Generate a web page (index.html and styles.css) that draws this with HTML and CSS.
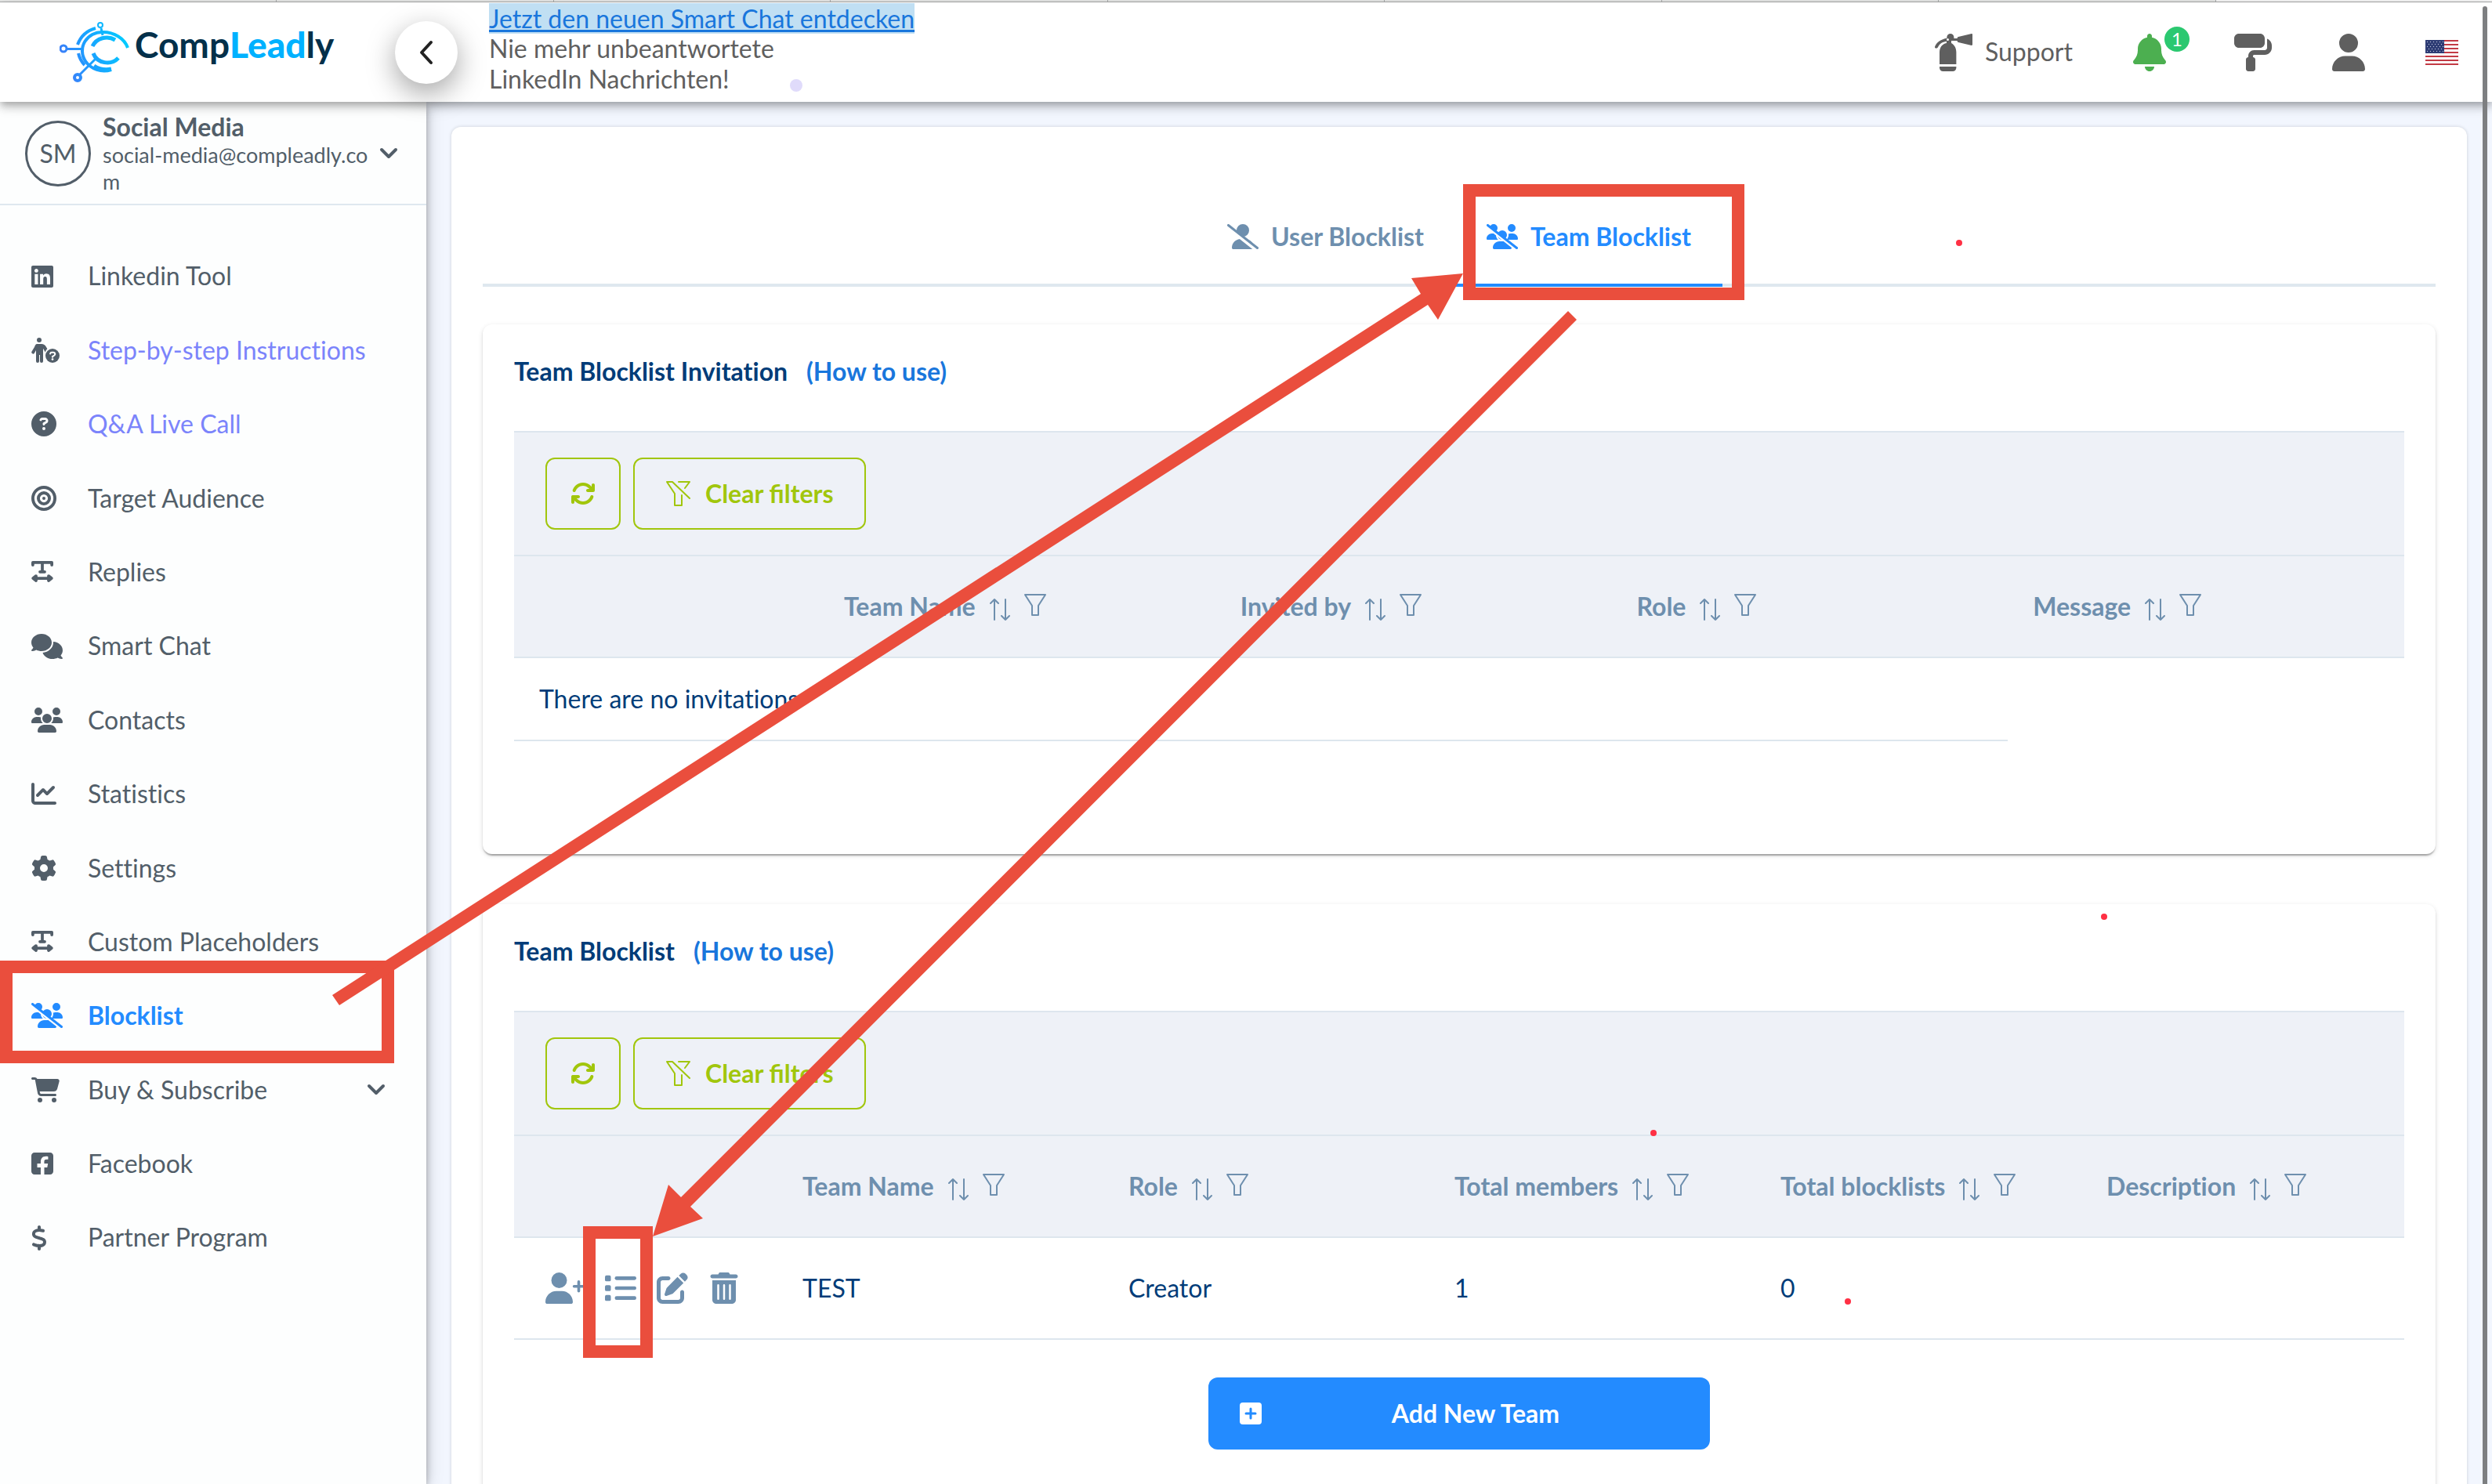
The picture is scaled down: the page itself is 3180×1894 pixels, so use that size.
FILE: index.html
```html
<!DOCTYPE html>
<html lang="en">
<head>
<meta charset="utf-8">
<title>CompLeadly – Team Blocklist</title>
<link rel="stylesheet" href="styles.css">
</head>
<body>
<svg class="sprite" aria-hidden="true">
  <defs>
    <symbol id="i-linkedin" viewBox="0 0 448 512"><path d="M416 32H31.9C14.3 32 0 46.5 0 64.3v383.4C0 465.5 14.3 480 31.9 480H416c17.6 0 32-14.5 32-32.3V64.3c0-17.8-14.4-32.3-32-32.3zM135.4 416H69V202.2h66.5V416zm-33.2-243c-21.3 0-38.5-17.3-38.5-38.5S80.9 96 102.2 96c21.2 0 38.5 17.3 38.5 38.5 0 21.3-17.2 38.5-38.5 38.5zm282.1 243h-66.4V312c0-24.8-.5-56.7-34.5-56.7-34.6 0-39.9 27-39.9 54.9V416h-66.4V202.2h63.7v29.2h.9c8.9-16.8 30.6-34.5 62.9-34.5 67.2 0 79.7 44.3 79.7 101.9V416z"/></symbol>
    <symbol id="i-question" viewBox="0 0 512 512"><path d="M256 512A256 256 0 1 0 256 0a256 256 0 1 0 0 512zM169.8 165.3c7.9-22.3 29.1-37.3 52.8-37.3h58.3c34.9 0 63.1 28.3 63.1 63.1c0 22.6-12.1 43.5-31.7 54.8L280 264.4c-.2 13-10.9 23.6-24 23.6c-13.3 0-24-10.7-24-24V250.5c0-8.6 4.6-16.5 12.1-20.8l44.3-25.4c4.7-2.7 7.6-7.7 7.6-13.1c0-8.4-6.8-15.1-15.1-15.1H222.6c-3.4 0-6.4 2.1-7.5 5.3l-.4 1.2c-4.4 12.5-18.2 19-30.6 14.6s-19-18.2-14.6-30.6l.4-1.2zM224 352a32 32 0 1 1 64 0 32 32 0 1 1 -64 0z"/></symbol>
    <symbol id="i-person-question" viewBox="0 0 576 512"><circle cx="160" cy="48" r="48"/><path d="M112 128h96c42 0 74 22 92 54l26 46c-22 18-34 42-40 70l-46-80V480a32 32 0 0 1-64 0V352h-16v128a32 32 0 0 1-64 0V256l-34 60a32 32 0 0 1-55-32l58-98c10-34 31-58 47-58z"/><circle cx="432" cy="368" r="144"/><path fill="none" stroke="#fff" stroke-width="34" stroke-linecap="round" d="M386 326c4-18 16-26 30-26h32c42 0 48 52 14 66l-30 18v12"/><circle cx="432" cy="440" r="22" fill="#fff"/></symbol>
    <symbol id="i-bullseye" viewBox="0 0 512 512"><g fill="none" stroke="currentColor" stroke-width="62"><circle cx="256" cy="256" r="225"/><circle cx="256" cy="256" r="113"/></g><circle cx="256" cy="256" r="32"/></symbol>
    <symbol id="i-textwidth" viewBox="0 0 448 512"><path fill="none" stroke="currentColor" stroke-width="60" stroke-linecap="round" stroke-linejoin="round" d="M30 112V62h388v50M224 62v190M176 252h96M70 384h308M96 336l-60 48 60 48zM352 336l60 48-60 48z"/></symbol>
    <symbol id="i-comments" viewBox="0 0 640 512"><path d="M208 352c114.9 0 208-78.8 208-176S322.9 0 208 0S0 78.8 0 176c0 38.6 14.7 74.3 39.6 103.4c-3.5 9.4-8.7 17.7-14.2 24.7c-4.8 6.2-9.7 11-13.3 14.3c-1.8 1.6-3.3 2.9-4.3 3.7c-.5 .4-.9 .7-1.1 .8l-.2 .2C1 327.2-1.4 334.4 .8 340.9S9.1 352 16 352c21.8 0 43.8-5.6 62.1-12.5c9.2-3.5 17.8-7.4 25.2-11.4C134.1 343.3 169.8 352 208 352zM448 176c0 112.3-99.1 196.9-216.5 207C255.8 457.4 336.4 512 432 512c38.2 0 73.9-8.7 104.7-23.9c7.5 4 16 7.9 25.2 11.4c18.3 6.9 40.3 12.5 62.1 12.5c6.9 0 13.1-4.5 15.2-11.1c2.1-6.6-.2-13.8-5.8-17.9l-.2-.2c-.2-.2-.6-.4-1.1-.8c-1-.8-2.5-2-4.3-3.7c-3.6-3.3-8.5-8.1-13.3-14.3c-5.5-7-10.7-15.4-14.2-24.7c24.9-29 39.6-64.7 39.6-103.4c0-92.8-84.9-168.9-192.6-175.5c.4 5.1 .6 10.3 .6 15.5z"/></symbol>
    <symbol id="i-users" viewBox="0 0 640 512"><path d="M144 0a80 80 0 1 1 0 160A80 80 0 1 1 144 0zM512 0a80 80 0 1 1 0 160A80 80 0 1 1 512 0zM0 298.7C0 239.8 47.8 192 106.7 192h42.7c15.9 0 31 3.5 44.6 9.7c-1.3 7.2-1.9 14.7-1.9 22.3c0 38.2 16.8 72.5 43.3 96c-.2 0-.4 0-.7 0H21.3C9.6 320 0 310.4 0 298.7zM405.3 320c-.2 0-.4 0-.7 0c26.6-23.5 43.3-57.8 43.3-96c0-7.6-.7-15-1.9-22.3c13.6-6.3 28.7-9.7 44.6-9.7h42.7C592.2 192 640 239.8 640 298.7c0 11.8-9.6 21.3-21.3 21.3H405.3zM224 224a96 96 0 1 1 192 0 96 96 0 1 1 -192 0zM128 485.3C128 411.7 187.7 352 261.3 352H378.7C452.3 352 512 411.7 512 485.3c0 14.7-11.9 26.7-26.7 26.7H154.7c-14.7 0-26.7-11.9-26.7-26.7z"/></symbol>
    <symbol id="i-users-slash" viewBox="0 0 640 512"><use href="#i-users" width="640" height="512"/><path stroke="#fff" stroke-width="60" d="M-10 32L600 512"/><path stroke="currentColor" stroke-width="48" stroke-linecap="round" d="M24 24L616 488"/></symbol>
    <symbol id="i-user" viewBox="0 0 448 512"><path d="M224 256A128 128 0 1 0 224 0a128 128 0 1 0 0 256zm-45.7 48C79.8 304 0 383.8 0 482.3C0 498.7 13.3 512 29.7 512H418.3c16.4 0 29.7-13.3 29.7-29.7C448 383.8 368.2 304 269.7 304H178.3z"/></symbol>
    <symbol id="i-user-slash" viewBox="0 0 640 512"><use href="#i-user" x="96" width="448" height="512"/><path stroke="#fff" stroke-width="84" d="M-10 44L600 524"/><path stroke="currentColor" stroke-width="48" stroke-linecap="round" d="M24 24L616 488"/></symbol>
    <symbol id="i-user-plus" viewBox="0 0 640 512"><use href="#i-user" width="448" height="512"/><path fill="none" stroke="currentColor" stroke-width="46" stroke-linecap="round" d="M544 152v152M468 228h152"/></symbol>
    <symbol id="i-chart" viewBox="0 0 512 512"><path d="M64 64c0-17.7-14.3-32-32-32S0 46.3 0 64V400c0 44.2 35.8 80 80 80H480c17.7 0 32-14.3 32-32s-14.3-32-32-32H80c-8.8 0-16-7.2-16-16V64zm406.6 86.6c12.5-12.5 12.5-32.8 0-45.3s-32.8-12.5-45.3 0L320 210.7l-57.4-57.4c-12.5-12.5-32.8-12.5-45.3 0l-112 112c-12.5 12.5-12.5 32.8 0 45.3s32.8 12.5 45.3 0L240 221.3l57.4 57.4c12.5 12.5 32.8 12.5 45.3 0l128-128z"/></symbol>
    <symbol id="i-gear" viewBox="0 0 512 512"><path d="M495.9 166.6c3.2 8.7 .5 18.4-6.4 24.6l-43.3 39.4c1.1 8.3 1.7 16.8 1.7 25.4s-.6 17.1-1.7 25.4l43.3 39.4c6.9 6.2 9.6 15.9 6.4 24.6c-4.4 11.9-9.7 23.3-15.8 34.3l-4.7 8.1c-6.6 11-14 21.4-22.1 31.2c-5.9 7.2-15.7 9.6-24.5 6.8l-55.7-17.7c-13.4 10.3-28.2 18.9-44 25.4l-12.5 57.1c-2 9.1-9 16.3-18.2 17.8c-13.8 2.3-28 3.5-42.5 3.5s-28.7-1.2-42.5-3.5c-9.2-1.5-16.2-8.7-18.2-17.8l-12.5-57.1c-15.8-6.5-30.6-15.1-44-25.4L83.1 425.9c-8.8 2.8-18.6 .3-24.5-6.8c-8.1-9.8-15.5-20.2-22.1-31.2l-4.7-8.1c-6.1-11-11.4-22.4-15.8-34.3c-3.2-8.7-.5-18.4 6.4-24.6l43.3-39.4C64.6 273.1 64 264.6 64 256s.6-17.1 1.7-25.4L22.4 191.2c-6.9-6.2-9.6-15.9-6.4-24.6c4.4-11.9 9.7-23.3 15.8-34.3l4.7-8.1c6.6-11 14-21.4 22.1-31.2c5.9-7.2 15.7-9.6 24.5-6.8l55.7 17.7c13.4-10.3 28.2-18.9 44-25.4l12.5-57.1c2-9.1 9-16.3 18.2-17.8C227.3 1.2 241.5 0 256 0s28.7 1.2 42.5 3.5c9.2 1.5 16.2 8.7 18.2 17.8l12.5 57.1c15.8 6.5 30.6 15.1 44 25.4l55.7-17.7c8.8-2.8 18.6-.3 24.5 6.8c8.1 9.8 15.5 20.2 22.1 31.2l4.7 8.1c6.1 11 11.4 22.4 15.8 34.3zM256 336a80 80 0 1 0 0-160 80 80 0 1 0 0 160z"/></symbol>
    <symbol id="i-cart" viewBox="0 0 576 512"><path d="M0 24C0 10.7 10.7 0 24 0H69.5c22 0 41.5 12.8 50.6 32h411c26.3 0 45.5 25 38.6 50.4l-41 152.3c-8.5 31.4-37 53.3-69.5 53.3H170.7l5.4 28.5c2.2 11.3 12.1 19.5 23.6 19.5H488c13.3 0 24 10.7 24 24s-10.7 24-24 24H199.7c-34.6 0-64.3-24.6-70.7-58.5L77.4 54.5c-.7-3.8-4-6.5-7.9-6.5H24C10.7 48 0 37.3 0 24zM128 464a48 48 0 1 1 96 0 48 48 0 1 1 -96 0zm336-48a48 48 0 1 1 0 96 48 48 0 1 1 0-96z"/></symbol>
    <symbol id="i-facebook" viewBox="0 0 448 512"><path d="M64 32C28.7 32 0 60.7 0 96V416c0 35.3 28.7 64 64 64h127V334.2H120V256h71V222.3c0-67 34-112.500 109-112.500c16.200 0 32 2 42.900 4.400V172c-6-.6-16.500-1-29.600-1c-42 0-50.200 15.900-50.200 50V256h76l-14.400 78.200H264V480H384c35.300 0 64-28.700 64-64V96c0-35.300-28.700-64-64-64H64z"/></symbol>
    <symbol id="i-dollar" viewBox="0 0 320 512"><path d="M160 0c17.700 0 32 14.300 32 32V67.700c1.600 .2 3.100 .4 4.700 .7c.4 .1 .7 .1 1.100 .2l48 8.800c17.400 3.200 28.900 19.900 25.700 37.200s-19.900 28.900-37.200 25.700l-47.500-8.700c-31.300-4.600-58.900-1.500-78.300 6.200s-27.200 18.300-29 28.100c-2 10.700-.5 16.700 1.200 20.400c1.800 3.900 5.500 8.300 12.800 13.200c16.300 10.700 41.300 17.700 73.700 26.300l2.900 .8c28.600 7.600 63.600 16.800 89.600 33.800c14.200 9.300 27.600 21.900 35.900 39.500c8.500 17.900 10.300 37.900 6.400 59.200c-6.900 38-33.100 63.400-65.600 76.700c-13.700 5.600-28.600 9.200-44.400 11V480c0 17.700-14.300 32-32 32s-32-14.300-32-32V445.100c-.4-.1-.9-.1-1.300-.2l-.2 0 0 0c-24.400-3.800-64.500-14.300-91.500-26.300c-16.100-7.200-23.400-26.100-16.200-42.200s26.100-23.400 42.200-16.200c20.900 9.300 55.300 18.500 75.200 21.600c31.900 4.700 58.200 2 76-5.300c16.900-6.900 24.600-16.900 26.800-28.900c1.900-10.600 .4-16.700-1.300-20.400c-1.900-4-5.600-8.400-13-13.300c-16.400-10.700-41.500-17.700-74-26.300l-2.800-.7C119.400 279.300 84.400 270 58.400 253c-14.200-9.300-27.500-22-35.800-39.600c-8.400-17.900-10.100-37.900-6.100-59.200C23.700 116 52.300 91.200 84.800 78.300c13.300-5.300 27.900-8.900 43.200-11V32c0-17.700 14.300-32 32-32z"/></symbol>
    <symbol id="i-extinguisher" viewBox="0 0 512 512"><path d="M500 1L320 42c-8 2-14 9-14 17v5h-46V48a48 48 0 0 0-96 0v12C88 72 20 116 0 178c-4 12 10 24 24 20c14-4 20-20 28-34c22-36 60-54 108-60v24C96 140 64 192 64 250V416h228V250c0-58-32-104-68-122V96h82v5c0 8 6 15 14 17l180 41c6 1 12-3 12-12V12c0-8-6-12-12-11zM176 64a16 16 0 1 1 0 32a16 16 0 1 1 0-32zM64 448H292v16c0 28-20 48-48 48H112c-28 0-48-20-48-48z"/></symbol>
    <symbol id="i-bell" viewBox="0 0 448 512"><path d="M224 0c-17.700 0-32 14.300-32 32V51.200C119 66 64 130.600 64 208v18.800c0 47-17.300 92.400-48.500 127.600l-7.400 8.300c-8.400 9.400-10.400 22.900-5.300 34.400S19.400 416 32 416H416c12.600 0 24-7.400 29.200-18.900s3.100-25-5.300-34.400l-7.400-8.300C401.300 319.200 384 273.900 384 226.800V208c0-77.400-55-142-128-156.800V32c0-17.700-14.300-32-32-32zm45.300 493.300c12-12 18.700-28.300 18.700-45.300H160c0 17 6.700 33.300 18.700 45.300s28.300 18.700 45.300 18.700s33.300-6.700 45.300-18.700z"/></symbol>
    <symbol id="i-roller" viewBox="0 0 512 512"><path d="M0 64C0 28.700 28.700 0 64 0H352c35.300 0 64 28.700 64 64v64c0 35.300-28.700 64-64 64H64c-35.300 0-64-28.700-64-64V64zM160 352c0-17.700 14.300-32 32-32V304c0-44.200 35.800-80 80-80H416c17.700 0 32-14.300 32-32V69.500c37.300 13.200 64 48.700 64 90.500v32c0 53-43 96-96 96H272c-8.800 0-16 7.200-16 16v16c17.700 0 32 14.300 32 32V480c0 17.700-14.300 32-32 32H192c-17.700 0-32-14.300-32-32V352z"/></symbol>
    <symbol id="i-refresh" viewBox="0 0 512 512"><path d="M105.100 202.600c7.700-21.800 20.200-42.300 37.800-59.800c62.500-62.500 163.800-62.500 226.300 0L386.300 160H352c-17.700 0-32 14.300-32 32s14.300 32 32 32H464c17.700 0 32-14.300 32-32V80c0-17.700-14.300-32-32-32s-32 14.300-32 32v35.200L414.400 97.600c-87.500-87.500-229.300-87.500-316.800 0C73.200 122 55.600 150.700 44.800 181.400c-5.900 16.700 2.900 34.900 19.500 40.800s34.900-2.900 40.800-19.500zM39 289.300c-5 1.500-9.800 4.200-13.700 8.200c-4 4-6.700 8.800-8.100 14c-.8 3-1.200 6-1.200 8.900V432c0 17.700 14.300 32 32 32s32-14.300 32-32V396.900l17.600 17.500c87.500 87.400 229.300 87.400 316.700 0c24.400-24.400 42.100-53.100 52.900-83.700c5.900-16.700-2.900-34.900-19.500-40.800s-34.900 2.900-40.800 19.500c-7.700 21.800-20.200 42.300-37.800 59.800c-62.500 62.500-163.800 62.500-226.300 0L125.600 352H160c17.700 0 32-14.300 32-32s-14.300-32-32-32H48.400z"/></symbol>
    <symbol id="i-list" viewBox="0 0 512 512"><rect x="0" y="48" width="96" height="96" rx="24"/><rect x="0" y="208" width="96" height="96" rx="24"/><rect x="0" y="368" width="96" height="96" rx="24"/><rect x="160" y="64" width="352" height="60" rx="30"/><rect x="160" y="226" width="352" height="60" rx="30"/><rect x="160" y="388" width="352" height="60" rx="30"/></symbol>
    <symbol id="i-edit" viewBox="0 0 512 512"><path d="M471.600 21.700c-21.900-21.900-57.300-21.900-79.200 0L362.300 51.700l97.900 97.900 30.100-30.100c21.900-21.900 21.900-57.300 0-79.200L471.600 21.700zm-299.200 220c-6.100 6.100-10.800 13.600-13.500 21.900l-29.600 88.800c-2.900 8.600-.6 18.100 5.800 24.600s15.900 8.700 24.600 5.800l88.800-29.600c8.200-2.700 15.700-7.400 21.900-13.500L437.700 172.300 339.700 74.300 172.400 241.700zM96 64C43 64 0 107 0 160V416c0 53 43 96 96 96H352c53 0 96-43 96-96V320c0-17.700-14.300-32-32-32s-32 14.300-32 32v96c0 17.700-14.300 32-32 32H96c-17.700 0-32-14.300-32-32V160c0-17.700 14.300-32 32-32h96c17.700 0 32-14.300 32-32s-14.300-32-32-32H96z"/></symbol>
    <symbol id="i-trash" viewBox="0 0 448 512"><path fill-rule="evenodd" d="M135.200 17.700L128 32H32C14.300 32 0 46.300 0 64S14.300 96 32 96H416c17.700 0 32-14.300 32-32s-14.300-32-32-32H320l-7.200-14.300C307.400 6.800 296.300 0 284.200 0H163.800c-12.100 0-23.200 6.800-28.600 17.700zM416 128H32V448c0 35.300 28.700 64 64 64H352c35.300 0 64-28.700 64-64V128zM112 208a16 16 0 0 1 32 0V432a16 16 0 0 1-32 0zM208 208a16 16 0 0 1 32 0V432a16 16 0 0 1-32 0zM304 208a16 16 0 0 1 32 0V432a16 16 0 0 1-32 0z"/></symbol>
    <symbol id="i-sort" viewBox="0 0 26 28"><path fill="none" stroke="currentColor" stroke-width="2" stroke-linecap="round" stroke-linejoin="round" d="M6 27V1M1 6l5-5 5 5M20 1v26M15 22l5 5 5-5"/></symbol>
    <symbol id="i-filter" viewBox="0 0 28 28"><path fill="none" stroke="currentColor" stroke-width="2" stroke-linejoin="round" d="M1 1h26l-9 14v12h-8V15z"/></symbol>
    <symbol id="i-filter-slash" viewBox="0 0 32 32"><path fill="none" stroke="currentColor" stroke-width="2" stroke-linejoin="round" stroke-linecap="round" d="M8 1H1l10 15v15h9V18M8 1l22 21M16 1h14l-6 8"/></symbol>
    <symbol id="i-plus-square" viewBox="0 0 28 28"><rect width="28" height="28" rx="4" fill="#fff"/><path stroke="#238bff" stroke-width="3" stroke-linecap="round" d="M14 8v12M8 14h12"/></symbol>
    <symbol id="i-chevron" viewBox="0 0 24 16"><path fill="none" stroke="currentColor" stroke-width="4" stroke-linecap="round" stroke-linejoin="round" d="M3 3l9 9 9-9"/></symbol>
  </defs>
</svg>

<div class="app">
  <div class="browser-tabs" aria-hidden="true"><i></i><i></i><i></i><i></i><i></i><i></i><i></i><i></i><i></i></div>

  <header class="topbar">
    <a class="brand" href="#">
      <svg class="brand-mark" viewBox="0 0 90 78" aria-hidden="true">
        <defs><linearGradient id="lg" gradientUnits="userSpaceOnUse" x1="0" y1="50" x2="90" y2="20"><stop offset="0" stop-color="#3f7af8"/><stop offset=".4" stop-color="#1ba0ff"/><stop offset="1" stop-color="#00d0ff"/></linearGradient></defs>
        <g fill="none" stroke="url(#lg)">
          <path stroke-width="4" d="M87 33A33 28 0 0 0 55 13A25 24 0 0 0 33 50A28 26 0 0 0 66 61"/>
          <path stroke-width="4" d="M46 8A34 34 0 0 0 23 29M24 40A32 32 0 0 0 32 55"/>
          <path stroke-width="5" d="M71 23A20 19 0 0 0 42 31M43 40A19 18 0 0 0 75 46"/>
          <path stroke-width="5" d="M44 56A28 27 0 0 0 66 60"/>
          <path stroke-width="3" d="M53 8L55 17M10 34.500H31M26 67L46 47"/>
          <circle cx="52" cy="4" r="3" stroke-width="2"/><circle cx="5" cy="34" r="4" stroke-width="3"/><circle cx="23" cy="71" r="4" stroke-width="4"/>
        </g>
      </svg>
      <span class="brand-name">Comp<b>Lead</b>ly</span>
    </a>
    <button class="collapse" aria-label="Collapse menu"><svg width="18" height="32" viewBox="0 0 18 32"><path fill="none" stroke="currentColor" stroke-width="4" stroke-linecap="round" stroke-linejoin="round" d="M15 3L3 16l12 13"/></svg></button>
    <p class="news"><a href="#">Jetzt den neuen Smart Chat entdecken</a><br>Nie mehr unbeantwortete<br>LinkedIn Nachrichten!</p>
    <div class="actions">
      <a class="support" href="#"><svg class="ic-48"><use href="#i-extinguisher"/></svg>Support</a>
      <button class="bell" aria-label="Notifications"><svg class="ic-42"><use href="#i-bell"/></svg><span class="badge">1</span></button>
      <button aria-label="Theme"><svg class="ic-48"><use href="#i-roller"/></svg></button>
      <button aria-label="Account"><svg class="ic-42"><use href="#i-user"/></svg></button>
      <button aria-label="Language"><svg class="flag" viewBox="0 0 42 32"><path fill="#fff" d="M0 0h42v32H0z"/><path stroke="#c23b45" stroke-width="2" d="M0 1h42M0 6h42M0 11h42M0 16h42M0 21h42M0 26h42M0 31h42"/><path fill="#2f3d75" d="M0 0h24v17H0z"/><path stroke="#c9cfe4" stroke-width="1" stroke-dasharray="1 3" d="M2 2.500h21M4 5.500h19M2 8.500h21M4 11.500h19M2 14.500h21"/></svg></button>
    </div>
  </header>

  <div class="body">
    <aside class="sidebar">
      <button class="profile">
        <span class="avatar">SM</span>
        <span class="who"><strong>Social Media</strong><span class="mail">social-media@compleadly.com</span></span>
        <svg class="chev"><use href="#i-chevron"/></svg>
      </button>
      <nav class="menu">
        <a href="#"><svg class="w28"><use href="#i-linkedin"/></svg>Linkedin Tool</a>
        <a href="#" class="help"><svg class="w36"><use href="#i-person-question"/></svg>Step-by-step Instructions</a>
        <a href="#" class="help"><svg class="w32"><use href="#i-question"/></svg>Q&amp;A Live Call</a>
        <a href="#"><svg class="w32"><use href="#i-bullseye"/></svg>Target Audience</a>
        <a href="#"><svg class="w28"><use href="#i-textwidth"/></svg>Replies</a>
        <a href="#"><svg class="w40"><use href="#i-comments"/></svg>Smart Chat</a>
        <a href="#"><svg class="w40"><use href="#i-users"/></svg>Contacts</a>
        <a href="#"><svg class="w32"><use href="#i-chart"/></svg>Statistics</a>
        <a href="#"><svg class="w32"><use href="#i-gear"/></svg>Settings</a>
        <a href="#"><svg class="w28"><use href="#i-textwidth"/></svg>Custom Placeholders</a>
        <a href="#" class="active"><svg class="w40"><use href="#i-users-slash"/></svg>Blocklist</a>
        <a href="#"><svg class="w36"><use href="#i-cart"/></svg>Buy &amp; Subscribe<svg class="chev"><use href="#i-chevron"/></svg></a>
        <a href="#"><svg class="w28"><use href="#i-facebook"/></svg>Facebook</a>
        <a href="#"><svg class="w20"><use href="#i-dollar"/></svg>Partner Program</a>
      </nav>
    </aside>

    <main class="main">
      <div class="page">
        <div class="tabs">
          <button><svg class="w40"><use href="#i-user-slash"/></svg>User Blocklist</button>
          <button class="active"><svg class="w40"><use href="#i-users-slash"/></svg>Team Blocklist</button>
        </div>

        <section class="card">
          <h2>Team Blocklist Invitation <a href="#">(How to use)</a></h2>
          <div class="toolbar">
            <button class="outline square" aria-label="Refresh"><svg class="w32"><use href="#i-refresh"/></svg></button>
            <button class="outline"><svg class="w32"><use href="#i-filter-slash"/></svg>Clear filters</button>
          </div>
          <table>
            <colgroup><col class="lead-wide"><col><col><col><col></colgroup>
            <thead><tr>
              <th></th>
              <th><span class="head">Team Name<svg class="sort"><use href="#i-sort"/></svg><svg class="filter"><use href="#i-filter"/></svg></span></th>
              <th><span class="head">Invited by<svg class="sort"><use href="#i-sort"/></svg><svg class="filter"><use href="#i-filter"/></svg></span></th>
              <th><span class="head">Role<svg class="sort"><use href="#i-sort"/></svg><svg class="filter"><use href="#i-filter"/></svg></span></th>
              <th><span class="head">Message<svg class="sort"><use href="#i-sort"/></svg><svg class="filter"><use href="#i-filter"/></svg></span></th>
            </tr></thead>
            <tbody><tr class="empty"><td colspan="4">There are no invitations</td></tr></tbody>
          </table>
          <div class="table-foot"></div>
        </section>

        <section class="card">
          <h2>Team Blocklist <a href="#">(How to use)</a></h2>
          <div class="toolbar">
            <button class="outline square" aria-label="Refresh"><svg class="w32"><use href="#i-refresh"/></svg></button>
            <button class="outline"><svg class="w32"><use href="#i-filter-slash"/></svg>Clear filters</button>
          </div>
          <table>
            <colgroup><col class="lead"><col><col><col><col><col class="tail"></colgroup>
            <thead><tr>
              <th></th>
              <th><span class="head">Team Name<svg class="sort"><use href="#i-sort"/></svg><svg class="filter"><use href="#i-filter"/></svg></span></th>
              <th><span class="head">Role<svg class="sort"><use href="#i-sort"/></svg><svg class="filter"><use href="#i-filter"/></svg></span></th>
              <th><span class="head">Total members<svg class="sort"><use href="#i-sort"/></svg><svg class="filter"><use href="#i-filter"/></svg></span></th>
              <th><span class="head">Total blocklists<svg class="sort"><use href="#i-sort"/></svg><svg class="filter"><use href="#i-filter"/></svg></span></th>
              <th><span class="head">Description<svg class="sort"><use href="#i-sort"/></svg><svg class="filter"><use href="#i-filter"/></svg></span></th>
            </tr></thead>
            <tbody><tr>
              <td class="ops"><div class="op-list">
                <button aria-label="Add member"><svg class="op-50"><use href="#i-user-plus"/></svg></button>
                <button aria-label="Show blocklists"><svg class="op-40"><use href="#i-list"/></svg></button>
                <button aria-label="Edit team"><svg class="op-40"><use href="#i-edit"/></svg></button>
                <button aria-label="Delete team"><svg class="op-40"><use href="#i-trash"/></svg></button>
              </div></td>
              <td>TEST</td><td>Creator</td><td>1</td><td>0</td><td></td>
            </tr></tbody>
          </table>
          <button class="primary"><svg class="w28"><use href="#i-plus-square"/></svg><span>Add New Team</span></button>
        </section>
      </div>
    </main>
  </div>

  <svg class="marks" width="3180" height="1894" viewBox="0 0 3180 1894" aria-hidden="true">
    <rect x="3168" y="8" width="6" height="1900" rx="3" fill="#7d7f81"/>
    <circle cx="1016" cy="109" r="8" fill="#e0dbfb"/>
    <g fill="#ff3044"><circle cx="2500" cy="310" r="4"/><circle cx="2685" cy="1170" r="4"/><circle cx="2110" cy="1446" r="4"/><circle cx="2358" cy="1661" r="4"/></g>
    <g fill="none" stroke="#ea4e3d" stroke-width="16"><rect x="8" y="1234" width="487" height="115"/><rect x="1875" y="243" width="343" height="132"/><rect x="752" y="1573" width="73" height="152"/></g>
    <g fill="#ea4e3d"><path d="M424 1270L1813 375L1801 355L1867 349L1835 408L1822 389L433 1283z"/><path d="M2001 397L2012 408L881 1540L897 1555L833 1578L853 1512L869 1528z"/></g>
  </svg>
</div>
</body>
</html>
```
FILE: styles.css
```css
* { box-sizing: border-box; }

body {
  margin: 0;
  overflow: hidden;
  background: #f2f6fe;
  color: #003c78;
  font-family: Lato, "Open Sans", sans-serif;
  font-size: 32px;
  font-variant-ligatures: no-common-ligatures;
  line-height: 1.2;
}

button {
  padding: 0;
  border: 0;
  background: none;
  color: inherit;
  font: inherit;
  cursor: pointer;
}

a { color: inherit; text-decoration: none; }
svg { display: block; flex: none; fill: currentColor; }
.sprite { position: absolute; width: 0; height: 0; }

.app { position: relative; display: flex; flex-direction: column; height: 100vh; overflow: hidden; }

.w20 { width: 20px; height: 32px; }
.w28 { width: 28px; height: 32px; }
.w32 { width: 32px; height: 32px; }
.w36 { width: 36px; height: 32px; }
.w40 { width: 40px; height: 32px; }
.ic-48 { width: 48px; height: 48px; }
.ic-42 { width: 42px; height: 48px; }
.chev { width: 24px; height: 16px; }

/* browser strip */
.browser-tabs { display: flex; flex: none; height: 3px; background: #e7e8e7; border-bottom: 1px solid #a9abab; }
.browser-tabs i { flex: 1; border-right: 1px solid #a9abab; }
.browser-tabs i:last-child { border: 0; background: #f8f8f8; }

/* top bar */
.topbar {
  position: relative;
  z-index: 3;
  display: flex;
  flex: none;
  align-items: center;
  height: 127px;
  padding-right: 43px;
  background: #fff;
  color: #5f5f5f;
  box-shadow: 0 4px 8px -2px rgba(0, 0, 0, .2), 0 8px 10px rgba(0, 0, 0, .14), 0 2px 20px rgba(0, 0, 0, .12);
}
.brand { display: flex; align-items: center; gap: 6px; width: 504px; padding-left: 76px; color: #04304a; }
.brand-mark { width: 90px; height: 78px; }
.brand-name { padding-bottom: 20px; font-size: 46px; font-weight: 700; }
.brand-name b { color: #00b1ff; }
.collapse {
  display: flex;
  align-items: center;
  justify-content: center;
  width: 80px;
  height: 80px;
  border-radius: 50%;
  background: #fff;
  color: #222;
  box-shadow: 0 12px 36px rgba(0, 0, 0, .36);
}
.news { align-self: flex-start; margin: 2px 0 0 40px; }
.news a { background: #c0dff3; color: #1976dc; text-decoration: underline; }
.actions { display: flex; align-items: center; gap: 77px; margin-left: auto; }
.support { display: flex; align-items: center; gap: 16px; }
.bell { position: relative; padding-right: 10px; color: #4caf50; }
.badge {
  position: absolute;
  top: -9px;
  left: 40px;
  width: 32px;
  height: 32px;
  border-radius: 50%;
  background: #2bc870;
  color: #fff;
  font-size: 24px;
  line-height: 32px;
  text-align: center;
}
.flag { width: 42px; height: 32px; }

/* sidebar */
.body { display: flex; flex: 1; min-height: 0; }
.sidebar {
  position: relative;
  z-index: 2;
  flex: none;
  width: 544px;
  background: #fdfefe;
  color: #525e69;
  box-shadow: 0 4px 8px -2px rgba(0, 0, 0, .2), 0 8px 10px rgba(0, 0, 0, .14), 0 2px 20px rgba(0, 0, 0, .22);
}
.profile {
  display: flex;
  align-items: center;
  width: 100%;
  padding: 13px 36px 11px 32px;
  border-bottom: 2px solid #dfe8ef;
  text-align: left;
}
.avatar {
  display: flex;
  flex: none;
  align-items: center;
  justify-content: center;
  width: 84px;
  height: 84px;
  border: 3px solid #525e69;
  border-radius: 50%;
}
.who { display: flex; flex: 1; flex-direction: column; min-width: 0; margin: 0 10px 0 15px; }
.mail { font-size: 27px; line-height: 34px; word-break: break-all; }
.menu { display: flex; flex-direction: column; padding-top: 43px; }
.menu a { display: grid; grid-template-columns: 72px 1fr 24px; align-items: center; padding: 28px 52px 28px 40px; }
.menu .help { color: #7b84fb; }
.menu .help svg { color: #525e69; }
.menu .active { color: #238bff; font-weight: 700; }

/* page */
.main { flex: 1; min-width: 0; padding: 32px 32px 0; }
.page { min-height: 100%; padding: 80px 40px; border-radius: 12px; background: #fff; box-shadow: 0 0 4px rgba(0, 0, 0, .16); }
.tabs { display: flex; justify-content: center; border-bottom: 4px solid #dfe8ef; }
.tabs button {
  display: flex;
  align-items: center;
  gap: 16px;
  margin-bottom: -4px;
  padding: 40px;
  border-bottom: 4px solid transparent;
  color: #6e8fae;
  font-weight: 700;
  line-height: 40px;
}
.tabs .active { border-color: #238bff; color: #238bff; }

.card {
  margin-top: 48px;
  padding: 40px;
  border-radius: 12px;
  background: #fff;
  box-shadow: 0 4px 2px -2px rgba(0, 0, 0, .2), 0 2px 2px rgba(0, 0, 0, .14), 0 2px 6px rgba(0, 0, 0, .12);
}
.card + .card { margin-top: 64px; }
.card h2 { display: flex; gap: 24px; margin: 0 0 56px; font-size: 32px; font-weight: 700; line-height: 40px; }
.card h2 a { color: #1976dc; }
.toolbar { display: flex; gap: 16px; padding: 32px 40px; border-top: 2px solid #dde6ee; background: #eef1f7; }
.outline {
  display: flex;
  align-items: center;
  justify-content: center;
  gap: 18px;
  height: 92px;
  padding: 0 40px;
  border: 2px solid #a1c60c;
  border-radius: 12px;
  color: #a1c60c;
  font-variant-ligatures: normal;
  font-weight: 700;
}
.square { width: 96px; padding: 0; }

table { width: 100%; border-spacing: 0; table-layout: fixed; }
.lead-wide { width: 389px; }
.lead { width: 336px; }
.tail { width: 412px; }
th { padding: 46px 32px; border-top: 2px solid #dde6ee; border-bottom: 2px solid #dde6ee; background: #eef1f7; color: #6e8fae; text-align: left; }
.head { display: flex; align-items: center; gap: 18px; height: 36px; white-space: nowrap; }
.sort { width: 26px; height: 28px; align-self: flex-end; }
.filter { width: 28px; height: 30px; padding-top: 2px; align-self: flex-start; }
td { padding: 44px 32px; border-bottom: 2px solid #dde6ee; line-height: 38px; }
.empty td { padding: 33px 32px; }
.ops { padding-left: 40px; }
.op-list { display: flex; gap: 26px; color: #6e8fae; }
.op-50 { width: 50px; height: 40px; }
.op-40 { width: 40px; height: 40px; }
.table-foot { height: 104px; }

.primary {
  display: flex;
  align-items: center;
  gap: 14px;
  width: 640px;
  height: 92px;
  margin: 48px auto 40px;
  padding: 0 40px;
  border-radius: 12px;
  background: #238bff;
  color: #fff;
  font-weight: 700;
}
.primary span { flex: 1; }

/* annotation layer */
.marks { position: absolute; top: 0; left: 0; z-index: 5; pointer-events: none; }
```
